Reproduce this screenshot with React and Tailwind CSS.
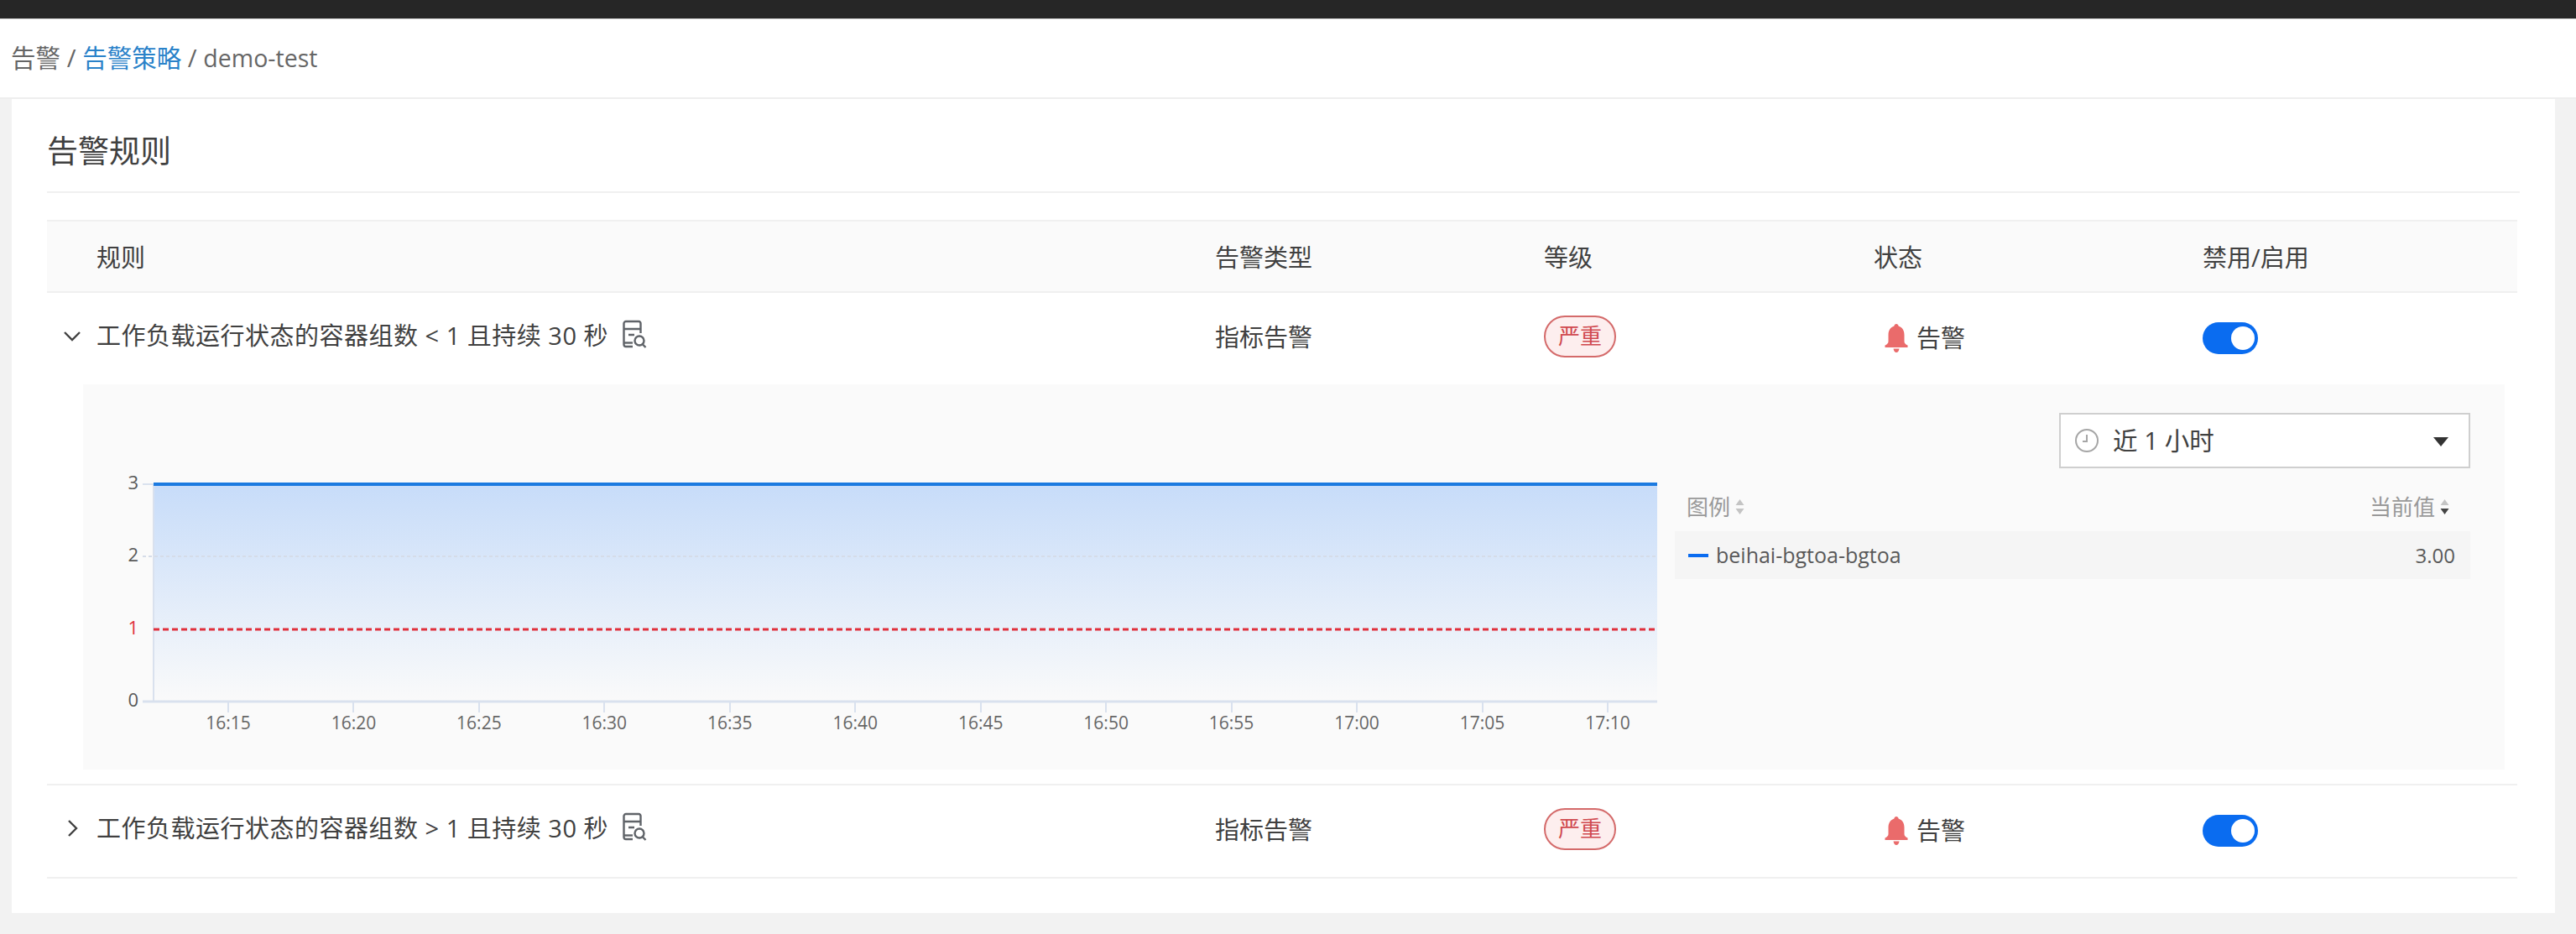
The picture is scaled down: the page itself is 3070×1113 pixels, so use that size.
const ticks = ['16:15','16:20','16:25','16:30','16:35','16:40','16:45','16:50','16:55','17:00','17:05','17:10'];

function DocSearch() {
  return (
    <svg width="30" height="36" viewBox="0 0 30 36" fill="none" stroke="#5f6368" strokeWidth="2.4" className="shrink-0">
      <path d="M13 32H5a2.500 2.500 0 0 1-2.500-2.500v-25A2.500 2.500 0 0 1 5 2h15a2.500 2.500 0 0 1 2.500 2.500V16" />
      <path d="M2.500 27.500H13" />
      <path d="M3 11h19M8 18h7" />
      <circle cx="21" cy="25" r="5.500" />
      <path d="M25 29.500l3.500 3.500" />
    </svg>
  );
}

function Bell() {
  return (
    <svg width="28" height="34" viewBox="0 0 28 34" className="shrink-0">
      <path fill="#ea6b6b" d="M14 0c1.400 0 2.400 1 2.600 2.600C21 4 23.500 8 23.500 13v8c0 2 1.600 3.400 4 4.600V28H.5v-2.400c2.400-1.200 4-2.600 4-4.600v-8C4.500 8 7 4 11.400 2.600 11.600 1 12.600 0 14 0z" />
      <path fill="#ea6b6b" d="M10.500 29.500h7C17.200 32 15.800 34 14 34s-3.200-2-3.500-4.500z" />
    </svg>
  );
}

function Row({ open, op }) {
  return (
    <div className="grid grid-cols-[1392px_392px_393px_392px_1fr] items-center h-[109px] pb-[4px] text-[29px] text-[#404040]">
      <div className="flex items-center pl-[15px] mt-[-3px]">
        <svg width="30" height="30" viewBox="0 0 30 30" fill="none" stroke="#404040" strokeWidth="2.4" className="shrink-0">
          {open ? <path d="M6 11l9 9 9-9" /> : <path d="M11 6l9 9-9 9" />}
        </svg>
        <span className="pl-[14px] whitespace-nowrap tracking-[0.5px]">{'工作负载运行状态的容器组数 ' + op + ' 1 且持续 30 秒'}</span>
        <span className="ml-[16px] mt-[-3px]"><DocSearch /></span>
      </div>
      <div>指标告警</div>
      <div>
        <span className="inline-flex items-center justify-center w-[86px] h-[50px] rounded-[25px] border-2 border-[#d46a6a] bg-[#fdeeee] text-[26px] text-[#d0494f] mt-[-4px]">严重</span>
      </div>
      <div className="flex items-center gap-[10px] pl-[13px] mt-[2px]">
        <Bell />
        <span>告警</span>
      </div>
      <div>
        <div className="flex items-center justify-end w-[66px] h-[38px] rounded-full bg-[#0a6cf0] pr-[4px] mt-[2px]">
          <div className="w-[28px] h-[28px] rounded-full bg-white" />
        </div>
      </div>
    </div>
  );
}

function Chart() {
  return (
    <svg width="1890" height="459" viewBox="0 0 1890 459" className="block absolute left-0 top-0">
      <defs>
        <linearGradient id="area" x1="0" y1="0" x2="0" y2="1">
          <stop offset="0" stopColor="#c7dcf9" />
          <stop offset="1" stopColor="#fafafa" />
        </linearGradient>
      </defs>
      <rect x="84" y="119" width="1792" height="259" fill="url(#area)" />
      <line x1="71" x2="1876" y1="205" y2="205" stroke="#d5dce8" strokeWidth="2" strokeDasharray="4 3" />
      <line x1="84" x2="84" y1="119" y2="378" stroke="#d9e1ee" strokeWidth="2" />
      <line x1="71" x2="1876" y1="378" y2="378" stroke="#d9e1ee" strokeWidth="3" />
      <line x1="84" x2="1876" y1="119" y2="119" stroke="#1b7ae0" strokeWidth="4" />
      <line x1="71" x2="84" y1="119" y2="119" stroke="#d9e1ee" strokeWidth="2" />
      <line x1="84" x2="1876" y1="292" y2="292" stroke="#e0303c" strokeWidth="3" strokeDasharray="7 4" />
    </svg>
  );
}

export default function App() {
  const xs = ticks.map((_, i) => 173 + i * 149.45);
  return (
    <div className="min-h-screen bg-[#f2f2f2] pb-[25px] font-['Open_Sans','Noto_Sans_CJK_SC',sans-serif]">
      <div className="h-[23px] bg-[#262626] border-b border-[#d8d8d8]" />
      <div className="h-[95px] bg-white border-b-2 border-[#eeeeee] flex items-center pl-[13px] text-[29.500px] text-[#666666] whitespace-pre">
        <span>告警 / </span>
        <span className="text-[#2a82c9]">告警策略</span>
        <span> / </span>
        <span className="text-[28.500px]">demo-test</span>
      </div>
      <div className="ml-[14px] mr-[25px] h-[970px] bg-white px-[42px]">
        <div className="h-[112px] border-b-2 border-[#f0f0f0] flex items-center text-[37px] text-[#404040] pt-[14px]">告警规则</div>
        <div className="w-[2944px]">
          <div className="mt-[32px] h-[87px] bg-[#fafafa] border-y-2 border-[#f0f0f0] grid grid-cols-[1392px_392px_393px_392px_1fr] items-center pt-[2px] text-[29px] text-[#404040]">
            <div className="pl-[59px]">规则</div>
            <div>告警类型</div>
            <div>等级</div>
            <div>状态</div>
            <div>禁用/启用</div>
          </div>
          <Row open op="<" />
          <div className="ml-[43px] mr-[15px] h-[459px] bg-[#fafafa] relative">
            <Chart />
            {[['3', 119], ['2', 205], ['1', 292], ['0', 378]].map(([t, y]) => (
              <span key={t} className={`absolute right-[calc(100%-66px)] text-[22px] leading-[24px] ${t === '1' ? 'text-[#e0303c]' : 'text-[#595959]'}`} style={{ top: y - 15 }}>{t}</span>
            ))}
            {ticks.map((t, i) => (
              <div key={t} className="absolute top-[378px] w-[100px] flex flex-col items-center" style={{ left: xs[i] - 50 }}>
                <div className="w-[2px] h-[13px] bg-[#d9e1ee]" />
                <span className="text-[21px] leading-[24px] text-[#666666]">{t}</span>
              </div>
            ))}
            <div className="absolute right-[41px] top-[34px] w-[490px]">
              <div className="h-[66px] bg-white border-2 border-[#cfcfcf] flex items-center pl-[16px] pr-[24px] text-[29.500px] text-[#404040]">
                <svg width="30" height="30" viewBox="0 0 30 30" fill="none" stroke="#a6a6a6" strokeWidth="2" className="shrink-0">
                  <circle cx="15" cy="15" r="13" />
                  <path d="M15 8v8h-5" />
                </svg>
                <span className="ml-[16px] whitespace-nowrap">近 1 小时</span>
                <svg width="18" height="11" viewBox="0 0 18 11" className="ml-auto mt-[2px]"><path d="M0 0h18L9 11z" fill="#333" /></svg>
              </div>
            </div>
            <div className="absolute left-[1897px] top-[117px] w-[948px]">
              <div className="h-[58px] flex items-center justify-between pl-[14px] pr-[24px] text-[26px] text-[#999999]">
                <span className="flex items-center gap-[5px]">图例
                  <svg width="13" height="22" viewBox="0 0 13 22"><path d="M6.500 2l5 7h-10zM6.500 20l5-7h-10z" fill="#c4c4c4" /></svg>
                </span>
                <span className="flex items-center gap-[5px]">当前值
                  <svg width="13" height="22" viewBox="0 0 13 22"><path d="M6.500 2l5 7h-10z" fill="#c4c4c4" /><path d="M6.500 20l5-7h-10z" fill="#444" /></svg>
                </span>
              </div>
              <div className="h-[57px] bg-[#f5f5f5] flex items-center justify-between pl-[16px] pr-[18px] text-[25px] text-[#595959]">
                <span className="flex items-center gap-[9px]"><span className="w-[24px] h-[4px] bg-[#0a6cf0]" />beihai-bgtoa-bgtoa</span>
                <span className="text-[24px]">3.00</span>
              </div>
            </div>
          </div>
          <div className="h-[19px] border-b-2 border-[#f0f0f0]" />
          <Row op=">" />
          <div className="border-b-2 border-[#f0f0f0]" />
        </div>
      </div>
    </div>
  );
}
